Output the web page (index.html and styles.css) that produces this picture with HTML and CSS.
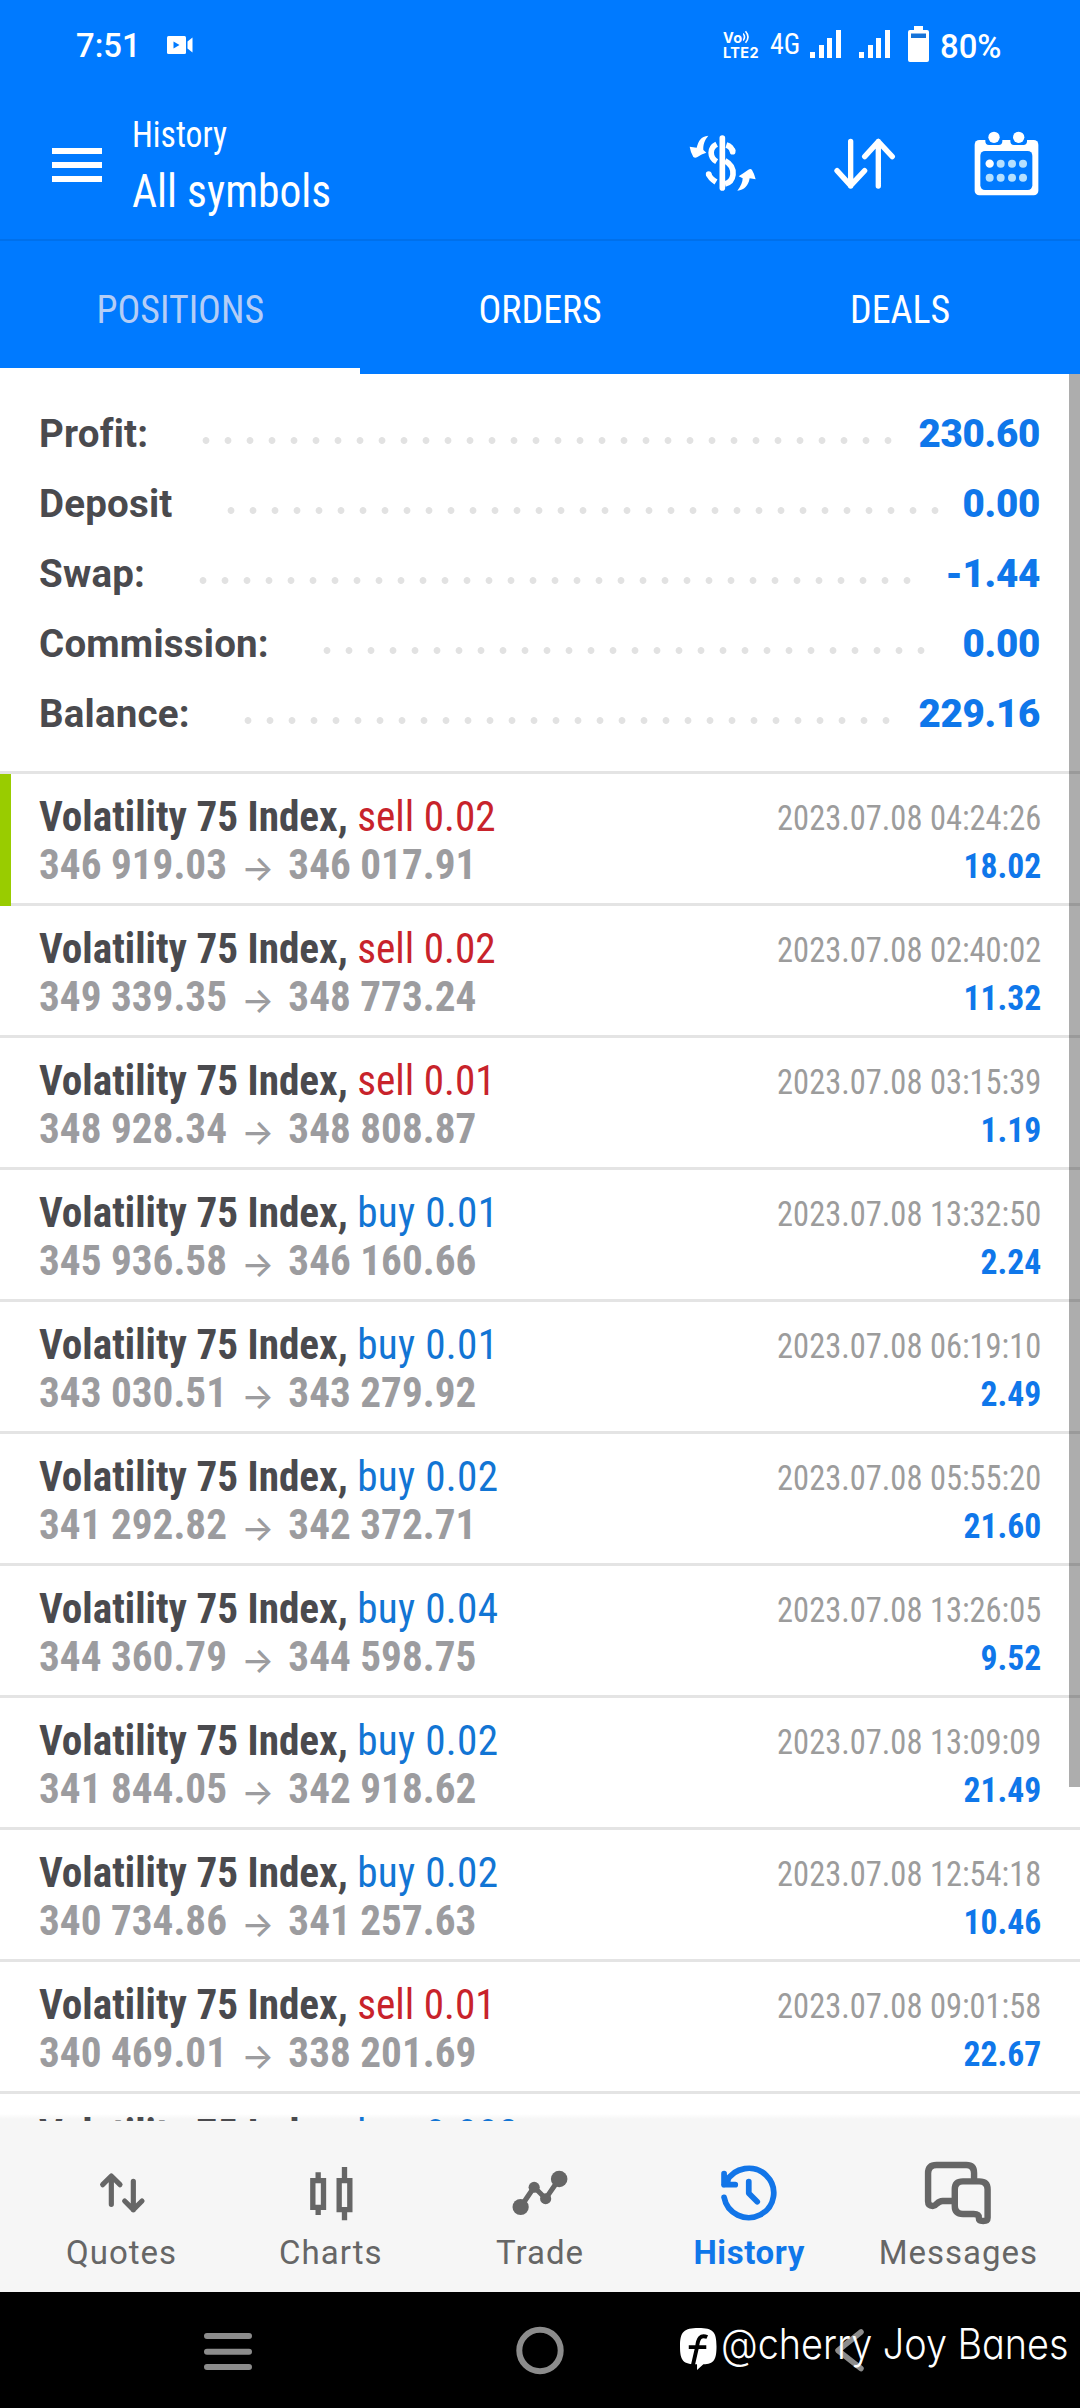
FILE: index.html
```html
<!DOCTYPE html>
<html lang="en">
<head>
<meta charset="utf-8">
<title>History</title>
<link rel="stylesheet" href="styles.css">
</head>
<body>
<div class="phone">
  <div class="status">
    <span class="status-time">7:51</span>
    <svg class="cam" viewBox="0 0 26 18"><rect width="19" height="18" rx="1.5" fill="#fff"/><path d="M6.500 5.500v7l6-3.500z" fill="#007aff"/><path d="M20.500 5.500l5-4v15l-5-4z" fill="#fff"/></svg>
    <div class="status-right">
      <div class="volte">
        <div class="volte-top">Vo<svg viewBox="0 0 8 14" width="8" height="14"><path d="M0 3.500q3 3.500 0 7M2.500 1.200q5 5.800 0 11.600" fill="none" stroke="#fff" stroke-width="1.600"/></svg></div>
        <div>LTE2</div>
      </div>
      <span class="net">4G</span>
      <svg class="signal" viewBox="0 0 31 28"><path d="M0 22h5v6H0zM9 15h5v13H9zM17 8h5v20h-5zM26 0h5v28h-5z" fill="#fff"/></svg>
      <svg class="signal second" viewBox="0 0 31 28"><path d="M0 22h5v6H0zM9 15h5v13H9zM17 8h5v20h-5zM26 0h5v28h-5z" fill="#fff"/></svg>
      <svg class="battery" viewBox="0 0 21 36"><path d="M6 0h9v4h4a2 2 0 0 1 2 2v28a2 2 0 0 1-2 2H2a2 2 0 0 1-2-2V6a2 2 0 0 1 2-2h4z" fill="#fff"/><path d="M3 7.500h15v4.500H3z" fill="#1673d8"/></svg>
      <span class="pct">80%</span>
    </div>
  </div>

  <header class="appbar">
    <svg class="burger" viewBox="0 0 50 34"><path d="M0 3h50M0 17h50M0 31h50" stroke="#fff" stroke-width="6"/></svg>
    <div class="titles">
      <div class="subtitle">History</div>
      <div class="title">All symbols</div>
    </div>
    <div class="actions">
      <svg width="70" height="60" viewBox="50 45 210 180" fill="none" stroke="#fff" stroke-width="17" stroke-linecap="round">
        <path d="M156 60V210"/>
        <path d="M139 79C117 90 117 118 139 131M168 81Q184 86 187 101M164 128C181 137 190 150 188 170C186 186 177 195 164 198M115 168Q119 181 137 192" stroke-linecap="butt"/>
        <path d="M187 98v3M115 168v1"/>
        <g fill="#fff" stroke="none"><path d="M114 53C91 55 85 68 79 89L58 86Q61 104 69 117Q74 121 80 118Q94 108 108 104L99 96C98 78 103 67 114 53z"/><path d="M201 218C212 204 217 192 217 181L205 175Q220 165 234 155Q241 150 245 156Q253 169 256 184L238 181C234 204 222 216 201 218z"/></g>
      </svg>
      <svg width="63.300" height="53.300" viewBox="520 85 190 160" fill="none" stroke="#fff" stroke-width="16" stroke-linecap="round" stroke-linejoin="round">
        <path d="M573 98V232M532 186L573 231L615 186M656 232V98M615 144L656 99L698 144"/>
      </svg>
      <svg width="66.700" height="66.700" viewBox="940 60 200 200">
        <rect x="945" y="90" width="191" height="166" rx="14" fill="#fff"/>
        <path d="M977 85h51v9q0 11-11 11h-29q-11 0-11-11zM1052 85h50v9q0 11-11 11h-28q-11 0-11-11z" fill="#007aff"/>
        <rect x="962" y="123" width="156" height="117" rx="14" fill="#007aff"/>
        <circle cx="1003" cy="82" r="17" fill="#fff"/><circle cx="1077" cy="82" r="17" fill="#fff"/>
        <circle cx="990" cy="161" r="12.500" fill="#fff"/>
        <g fill="#b5e0ff"><circle cx="1023" cy="161" r="12"/><circle cx="1057" cy="161" r="12"/><circle cx="1090" cy="161" r="12"/><circle cx="990" cy="203" r="12"/><circle cx="1023" cy="203" r="12"/><circle cx="1057" cy="203" r="12"/><circle cx="1090" cy="203" r="12"/></g>
      </svg>
    </div>
  </header>

  <nav class="tabs">
    <div class="tab active"><span>POSITIONS</span></div>
    <div class="tab"><span>ORDERS</span></div>
    <div class="tab"><span>DEALS</span></div>
  </nav>

  <main class="content">
    <section class="summary">
      <div class="sum"><span>Profit:</span><div class="lead"><i></i></div><b>230.60</b></div>
      <div class="sum"><span>Deposit</span><div class="lead"><i></i></div><b>0.00</b></div>
      <div class="sum"><span>Swap:</span><div class="lead"><i></i></div><b>-1.44</b></div>
      <div class="sum"><span>Commission:</span><div class="lead"><i></i></div><b>0.00</b></div>
      <div class="sum"><span>Balance:</span><div class="lead"><i></i></div><b>229.16</b></div>
    </section>
    <section class="deals">
      <div class="deal marked"><div class="info"><div class="name">Volatility 75 Index, <span class="sell">sell 0.02</span></div><div class="price">346 919.03<i>→</i>346 017.91</div></div><div class="meta"><div class="date">2023.07.08 04:24:26</div><div class="gain">18.02</div></div></div>
      <div class="deal"><div class="info"><div class="name">Volatility 75 Index, <span class="sell">sell 0.02</span></div><div class="price">349 339.35<i>→</i>348 773.24</div></div><div class="meta"><div class="date">2023.07.08 02:40:02</div><div class="gain">11.32</div></div></div>
      <div class="deal"><div class="info"><div class="name">Volatility 75 Index, <span class="sell">sell 0.01</span></div><div class="price">348 928.34<i>→</i>348 808.87</div></div><div class="meta"><div class="date">2023.07.08 03:15:39</div><div class="gain">1.19</div></div></div>
      <div class="deal"><div class="info"><div class="name">Volatility 75 Index, <span class="buy">buy 0.01</span></div><div class="price">345 936.58<i>→</i>346 160.66</div></div><div class="meta"><div class="date">2023.07.08 13:32:50</div><div class="gain">2.24</div></div></div>
      <div class="deal"><div class="info"><div class="name">Volatility 75 Index, <span class="buy">buy 0.01</span></div><div class="price">343 030.51<i>→</i>343 279.92</div></div><div class="meta"><div class="date">2023.07.08 06:19:10</div><div class="gain">2.49</div></div></div>
      <div class="deal"><div class="info"><div class="name">Volatility 75 Index, <span class="buy">buy 0.02</span></div><div class="price">341 292.82<i>→</i>342 372.71</div></div><div class="meta"><div class="date">2023.07.08 05:55:20</div><div class="gain">21.60</div></div></div>
      <div class="deal"><div class="info"><div class="name">Volatility 75 Index, <span class="buy">buy 0.04</span></div><div class="price">344 360.79<i>→</i>344 598.75</div></div><div class="meta"><div class="date">2023.07.08 13:26:05</div><div class="gain">9.52</div></div></div>
      <div class="deal"><div class="info"><div class="name">Volatility 75 Index, <span class="buy">buy 0.02</span></div><div class="price">341 844.05<i>→</i>342 918.62</div></div><div class="meta"><div class="date">2023.07.08 13:09:09</div><div class="gain">21.49</div></div></div>
      <div class="deal"><div class="info"><div class="name">Volatility 75 Index, <span class="buy">buy 0.02</span></div><div class="price">340 734.86<i>→</i>341 257.63</div></div><div class="meta"><div class="date">2023.07.08 12:54:18</div><div class="gain">10.46</div></div></div>
      <div class="deal"><div class="info"><div class="name">Volatility 75 Index, <span class="sell">sell 0.01</span></div><div class="price">340 469.01<i>→</i>338 201.69</div></div><div class="meta"><div class="date">2023.07.08 09:01:58</div><div class="gain">22.67</div></div></div>
      <div class="deal peek"><div class="info"><div class="name">Volatility 75 Index, <span class="buy">buy 0.002</span></div></div></div>
    </section>
    <div class="scrollbar"></div>
  </main>

  <nav class="bottom">
    <div class="item">
      <svg viewBox="65 15 240 210" fill="none" stroke="#666" stroke-width="15.500" stroke-linecap="round" stroke-linejoin="round"><path d="M153 163V80M127 104L153 78L179 104M219 94V179M193 153L219 179L245 153"/></svg>
      <span>Quotes</span>
    </div>
    <div class="item">
      <svg viewBox="692 15 240 210" fill="none" stroke="#666" stroke-width="16"><path d="M757.500 92h32v80h-32zM773.500 67v25M773.500 172v23M836.500 92h32v87h-32zM852.500 51v41M852.500 179v32"/></svg>
      <span>Charts</span>
    </div>
    <div class="item">
      <svg viewBox="30 15 236.600 210" preserveAspectRatio="none" fill="#666"><path d="M91 171L131 111L165 146L205 87" fill="none" stroke="#666" stroke-width="15"/><circle cx="91" cy="171" r="24"/><circle cx="131" cy="112" r="16.500"/><circle cx="165" cy="146" r="16.500"/><circle cx="205" cy="87" r="24.500"/></svg>
      <span>Trade</span>
    </div>
    <div class="item current">
      <svg viewBox="648.400 15 236.600 210" preserveAspectRatio="none" fill="none" stroke="#1275e8" stroke-width="17" stroke-linecap="round" stroke-linejoin="round"><path d="M693 142A74 74 0 1 0 700 95M693 71V104H726M693 104L704 92M766 95V130L791 155"/></svg>
      <span>History</span>
    </div>
    <div class="item">
      <svg viewBox="1267.200 15 236.600 210" preserveAspectRatio="none" fill="none" stroke="#666" stroke-width="19" stroke-linejoin="round"><path d="M1433 90V69Q1433 45 1410 45H1322Q1297 45 1297 70V154Q1297 168 1311 168Q1317 168 1323 161Q1331 153 1340 153H1375"/><path d="M1376 118Q1376 94 1400 94H1448Q1473 94 1473 118V203Q1473 213 1460 213Q1447 213 1447 203Q1447 192 1432 192H1400Q1376 192 1376 168z"/></svg>
      <span>Messages</span>
    </div>
  </nav>

  <footer class="sysbar">
    <svg width="50" height="50" viewBox="0 0 50 50"><path d="M4 10h42M4 25.700h42M4 41h42" stroke="#8c8c8c" stroke-width="6" stroke-linecap="round"/></svg>
    <svg width="50" height="50" viewBox="0 0 50 50"><circle cx="25" cy="24.500" r="20.700" fill="none" stroke="#8c8c8c" stroke-width="6"/></svg>
    <svg width="50" height="50" viewBox="0 0 50 50"><path d="M34 6L11 24.500L34 42.500" fill="none" stroke="#8c8c8c" stroke-width="5.500" stroke-linecap="round" stroke-linejoin="round"/></svg>
    <div class="mark">
      <svg width="37" height="43" viewBox="0 0 38 45" preserveAspectRatio="none"><path d="M19 0C34 0 37.500 4 37.500 19C37.500 33 35 37.500 24 38L17.500 44V38C3 38 0 34 0 19C0 4 4 0 19 0z" fill="#fff"/><path d="M28 9.500C21 6.500 18.500 11 17.500 20L13 40M9 20h18" fill="none" stroke="#000" stroke-width="4"/></svg>
      <span>@cherry Joy Banes</span>
    </div>
  </footer>
</div>
</body>
</html>
```
FILE: styles.css
```css
* { box-sizing: border-box; }
body { margin: 0; background: #fff; font-family: Roboto, "Noto Sans", sans-serif; }
svg { display: block; flex: none; }
i { font-style: normal; }

.phone { width: 1080px; height: 2408px; display: flex; flex-direction: column; overflow: hidden; }

/* status bar */
.status { height: 92px; background: #007aff; color: #fff; display: flex; align-items: center; padding: 0 77px 0 76px; }
.status-time { font-size: 33.500px; font-weight: 500; line-height: 92px; width: 91px; transform: scaleX(.98); transform-origin: left; }
.cam { width: 26px; height: 18px; margin-bottom: 3px; }
.status-right { margin-left: auto; display: flex; align-items: center; }
.volte { width: 47px; font: 700 14.500px/15px Inter, sans-serif; letter-spacing: .4px; margin-bottom: 3px; }
.volte-top { display: flex; gap: 0; }
.net { width: 40px; font-family: "Roboto Condensed", Roboto, sans-serif; font-size: 29px; font-weight: 400; transform: scaleX(.96); transform-origin: left; margin-bottom: 4px; }
.signal { width: 31px; height: 28px; margin-bottom: 5px; }
.second { margin-left: 18px; }
.battery { width: 21px; height: 36px; margin: 0 0 4px 18px; }
.pct { width: 63px; margin-left: 11px; font-size: 33.500px; font-weight: 500; transform: scaleX(.98); transform-origin: left; }

/* title bar */
.appbar { height: 149px; background: #007aff; border-bottom: 2px solid #0070eb; color: #fff; display: flex; align-items: flex-start; font-family: "Roboto Condensed", Roboto, sans-serif; padding-left: 52px; }
.burger { width: 50px; height: 34px; margin-top: 56px; }
.titles { margin: 18px 0 0 30px; white-space: nowrap; }
.subtitle { font-size: 36px; line-height: 50px; transform: scaleX(.935); transform-origin: left; }
.title { font-size: 47px; line-height: 62px; transform: scaleX(.927); transform-origin: left; }
.actions { margin: 38px 40px 0 auto; display: flex; align-items: center; gap: 76.600px; }

/* tabs */
.tabs { height: 133px; background: #007aff; color: #fff; display: grid; grid-template-columns: repeat(3, 1fr); font-family: "Roboto Condensed", Roboto, sans-serif; }
.tab { display: flex; justify-content: center; align-items: center; font-size: 39.500px; padding-top: 4px; }
.tab span { transform: scaleX(.96); }
.active { box-shadow: inset 0 -6px #fff; color: #b4cdf6; }

/* account totals */
.content { height: 1747px; overflow: hidden; position: relative; }
.summary { height: 400px; padding: 25px 40px 0 39px; border-bottom: 3px solid #e4e4e4; }
.sum { height: 70px; line-height: 70px; font-size: 38.500px; font-weight: 700; display: flex; color: #4a4a4e; }
.sum span { letter-spacing: .2px; }
.sum b { color: #0f77ea; letter-spacing: -.3px; }
.lead { flex: 1; margin: 0 14px 0 47px; }
.lead i { display: block; height: 70px; width: round(down, 100%, 22px); background: radial-gradient(circle at 50% 41.500px, #e2e2e2 3px, transparent 3.800px) 0 0 / 22px 70px; }

/* closed positions */
.deal { height: 132px; border-bottom: 3px solid #e4e4e4; display: flex; justify-content: space-between; padding: 18px 39px 0 39px; position: relative; font-family: "Roboto Condensed", Roboto, sans-serif; white-space: nowrap; }
.marked::before { content: ""; position: absolute; left: 0; top: 0; width: 11px; height: 132px; background: #9c0; }
.info { font-size: 43px; line-height: 48px; font-weight: 700; transform: scaleX(.958); transform-origin: left; }
.name { color: #4a4a4e; }
.sell, .buy { font-weight: 400; }
.sell { color: #c8232b; }
.buy { color: #1275d4; letter-spacing: .3px; }
.price { color: #9c9c9f; display: flex; }
.price i { font: 500 36px/56px Inter, sans-serif; height: 48px; width: 64px; text-align: center; }
.meta { padding-top: 2px; font-size: 35.800px; line-height: 48px; text-align: right; }
.date { color: #9c9c9c; transform: scaleX(.907); transform-origin: right; }
.gain { color: #0f77ea; font-weight: 700; transform: scaleX(.94); transform-origin: right; }
.peek { padding-top: 16px; background: linear-gradient(#fff 20px, #f6f6f6 25px); }
.scrollbar { position: absolute; right: 0; top: 0; width: 11px; height: 1413px; background: rgba(0, 0, 0, .32); }

/* bottom navigation */
.bottom { height: 171px; background: #f6f6f6; padding: 34px 17px 0; display: grid; grid-template-columns: repeat(5, 1fr); }
.item { display: flex; flex-direction: column; align-items: center; font-size: 33px; line-height: 40px; letter-spacing: 1px; color: #666; }
.item svg { width: 80px; height: 70px; margin-bottom: 8px; }
.current { color: #0f77ea; font-weight: 700; letter-spacing: .6px; }

/* system navigation */
.sysbar { height: 116px; background: #000; padding: 34px 72px 0; display: grid; grid-template-columns: repeat(3, 1fr); justify-items: center; position: relative; }
.mark { position: absolute; left: 680px; top: 36px; display: flex; color: #fff; }
.mark span { font: 300 42px/52px Inter, sans-serif; font-feature-settings: "cv11"; white-space: nowrap; margin: -10px 0 0 4px; transform: scaleX(.9); transform-origin: left; }
```
